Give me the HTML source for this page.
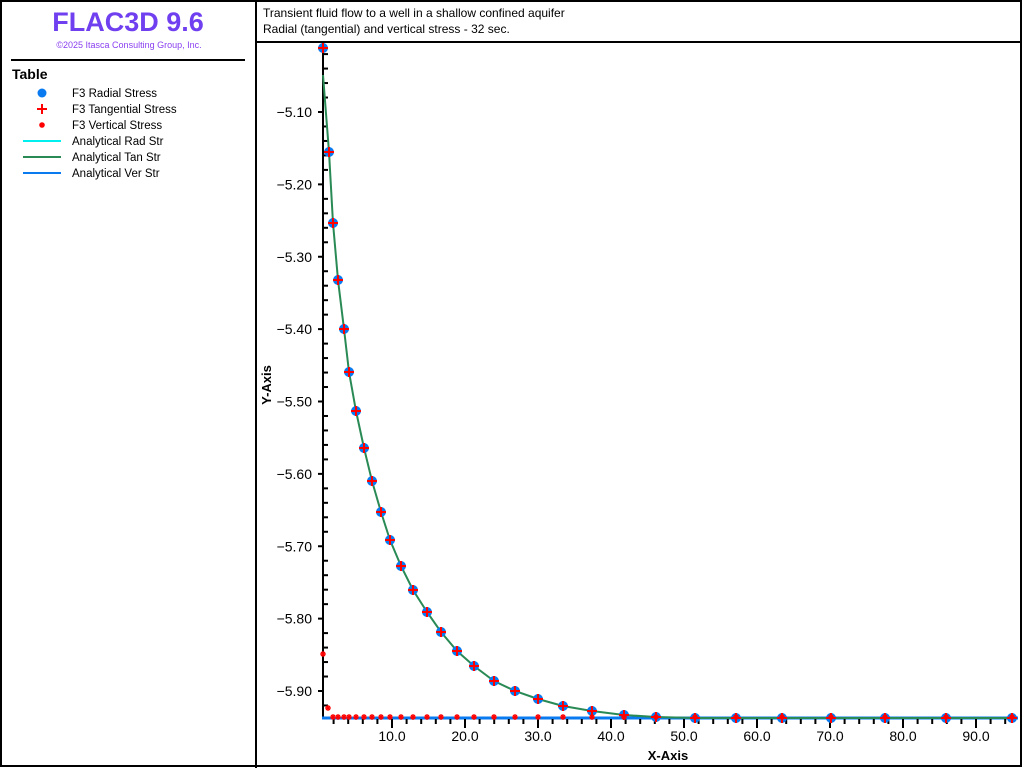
<!DOCTYPE html>
<html><head><meta charset="utf-8"><style>
html,body{margin:0;padding:0;background:#fff;}
svg{display:block;font-family:"Liberation Sans",sans-serif;}
</style></head><body>
<svg id="s" width="1024" height="768" viewBox="0 0 1024 768" xmlns="http://www.w3.org/2000/svg">
<rect x="0" y="0" width="1024" height="768" fill="#fff"/>
<rect x="1" y="1" width="1020" height="765" fill="none" stroke="#000" stroke-width="2"/>
<line x1="256" y1="0" x2="256" y2="768" stroke="#000" stroke-width="2"/>
<line x1="256" y1="42" x2="1022" y2="42" stroke="#000" stroke-width="2"/>
<line x1="11" y1="60" x2="245" y2="60" stroke="#000" stroke-width="2"/>
<text x="128" y="31" text-anchor="middle" font-size="27" font-weight="bold" fill="#7040f0">FLAC3D 9.6</text>
<text x="129" y="48" text-anchor="middle" font-size="9" fill="#8a40f0">©2025 Itasca Consulting Group, Inc.</text>
<text x="12" y="79" font-size="14" font-weight="bold">Table</text>
<g font-size="11.5" fill="#000">
<circle cx="42" cy="93" r="4.5" fill="#0a7af0"/><text x="72" y="97">F3 Radial Stress</text>
<path d="M37 109h10M42 104v10" stroke="#f00" stroke-width="2"/><text x="72" y="113">F3 Tangential Stress</text>
<circle cx="42" cy="125" r="2.8" fill="#f00"/><text x="72" y="129">F3 Vertical Stress</text>
<line x1="23" y1="141" x2="61" y2="141" stroke="#00f0f0" stroke-width="2"/><text x="72" y="145">Analytical Rad Str</text>
<line x1="23" y1="157" x2="61" y2="157" stroke="#2a8a55" stroke-width="2"/><text x="72" y="161">Analytical Tan Str</text>
<line x1="23" y1="173" x2="61" y2="173" stroke="#0a7af0" stroke-width="2"/><text x="72" y="177">Analytical Ver Str</text>
</g>
<text x="263" y="17" font-size="12">Transient fluid flow to a well in a shallow confined aquifer</text>
<text x="263" y="33" font-size="12">Radial (tangential) and vertical stress - 32 sec.</text>
<g id="ax"></g>
<text x="668" y="760" text-anchor="middle" font-size="13" font-weight="bold">X-Axis</text>
<text transform="translate(271,385) rotate(-90)" text-anchor="middle" font-size="13" font-weight="bold">Y-Axis</text>
</svg>
<script>
var g=document.getElementById('ax'),h='';
function L(a,b,c,d,col,w){h+='<line x1="'+a+'" y1="'+b+'" x2="'+c+'" y2="'+d+'" stroke="'+(col||'#000')+'" stroke-width="'+(w||2)+'"/>';}
L(323,44,323,719);L(322,718,1018,718,'#0a7af0',3);
for(var i=0;i<=50;i++){var v=-5.0+ -0.02*i;var y=112+(-5.10-v)*723.75;if(y<46||y>716)continue;
 var maj=(i%5)==0;L(maj?318:323,y,maj?323:328,y);
 if(maj){h+='<text x="312" y="'+(y+5)+'" text-anchor="end" font-size="14">'+v.toFixed(2).replace('-','−')+'</text>';}}
for(var r=2;r<=94;r+=2){var x=319+7.3*r;var maj=r%10==0;L(x,719,x,maj?728:724);
 if(maj)h+='<text x="'+x+'" y="741" text-anchor="middle" font-size="14">'+r.toFixed(1)+'</text>';}
var px=[323,329,333,338,344,349,356,364,372,381,390,401,413,427,441,457,474,494,515,538,563,592,624,656,695,736,782,831,885,946,1012];
var py=[48,152,223,280,329,372,411,448,481,512,540,566,590,612,632,651,666,681,691,699,706,711,715,717,718,718,718,718,718,718,718];
var pts='323,75';for(var k=1;k<px.length;k++)pts+=' '+px[k]+','+py[k];
h+='<polyline points="'+pts+'" fill="none" stroke="#2a8a55" stroke-width="2"/>';
for(var k=0;k<px.length;k++){h+='<circle cx="'+px[k]+'" cy="'+py[k]+'" r="5" fill="#0a7af0"/>';
 h+='<path d="M'+(px[k]-5)+' '+py[k]+'h10M'+px[k]+' '+(py[k]-5)+'v10" stroke="#f00" stroke-width="2"/>';}
function A(x,y){h+='<path d="M'+(x-3)+' '+y+'h6M'+x+' '+(y-3)+'v6M'+(x-2)+' '+(y-2)+'l4 4M'+(x+2)+' '+(y-2)+'l-4 4" stroke="#f00" stroke-width="1.3"/>';}
A(323,654);A(328,708);for(var k=2;k<px.length;k++)A(px[k],717);
g.innerHTML=h;
</script>
</body></html>
